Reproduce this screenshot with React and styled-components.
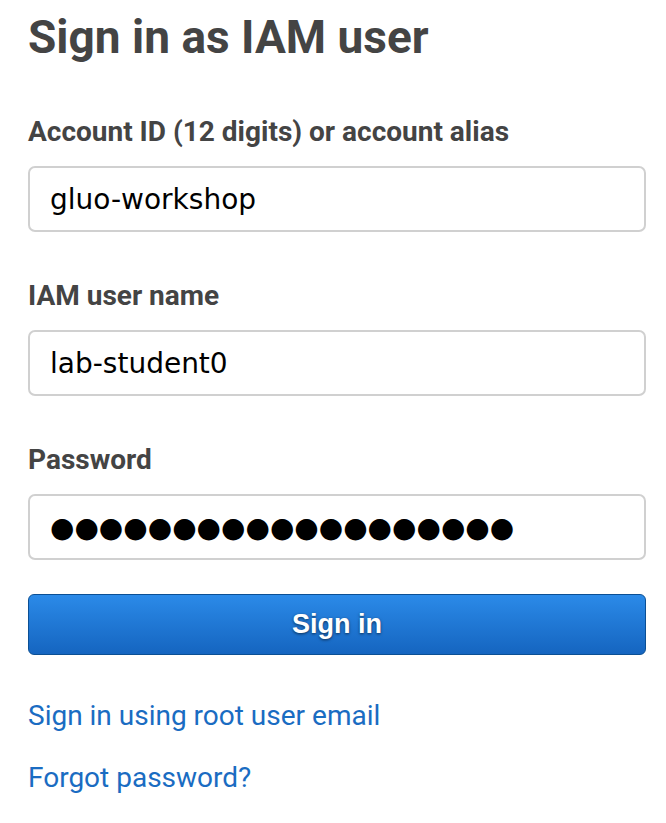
import styled, { createGlobalStyle } from 'styled-components'

const GlobalStyle = createGlobalStyle`
  html, body {
    margin: 0;
    padding: 0;
    background: #fff;
  }
`

const Page = styled.div`
  width: 618px;
  padding: 9px 0 0 28px;
  font-family: Roboto, "Liberation Sans", sans-serif;
  color: #444;
`

const Title = styled.h1`
  margin: 0 0 51px;
  font-size: 46px;
  font-weight: 700;
  line-height: 56px;
  color: #444;
`

const Field = styled.div`
  display: flex;
  flex-direction: column;
  gap: 18px;
  margin-bottom: ${(p) => (p.$last ? '34px' : '48px')};
`

const Label = styled.label`
  font-size: 28px;
  font-weight: 700;
  line-height: 32px;
  color: #444;
`

const Input = styled.div`
  box-sizing: border-box;
  height: 66px;
  border: 2px solid #d0d0d0;
  border-radius: 7px;
  padding: 0 20px;
  display: flex;
  align-items: center;
  font-family: "DejaVu Sans", sans-serif;
  font-size: 28px;
  color: #000;
`

const Button = styled.button`
  display: block;
  box-sizing: border-box;
  width: 100%;
  height: 61px;
  border: 1px solid #0b4f94;
  border-radius: 6px;
  background: linear-gradient(#2b8ae8, #1565c0);
  color: #fff;
  font-family: "Liberation Sans", Arial, sans-serif;
  font-size: 27px;
  font-weight: 700;
  text-shadow: 0 1px 3px rgba(0, 0, 0, 0.6);
  margin: 0;
`

const Links = styled.div`
  display: flex;
  flex-direction: column;
  gap: 30px;
  margin-top: 45px;
`

const Link = styled.a`
  font-size: 28px;
  line-height: 32px;
  color: #1a6cc2;
  text-decoration: none;
`

export default function App() {
  return (
    <>
      <GlobalStyle />
      <Page>
        <Title>Sign in as IAM user</Title>
        <Field>
          <Label>Account ID (12 digits) or account alias</Label>
          <Input>gluo-workshop</Input>
        </Field>
        <Field>
          <Label>IAM user name</Label>
          <Input>lab-student0</Input>
        </Field>
        <Field $last>
          <Label>Password</Label>
          <Input>{'●'.repeat(19)}</Input>
        </Field>
        <Button>Sign in</Button>
        <Links>
          <Link href="#">Sign in using root user email</Link>
          <Link href="#">Forgot password?</Link>
        </Links>
      </Page>
    </>
  )
}
